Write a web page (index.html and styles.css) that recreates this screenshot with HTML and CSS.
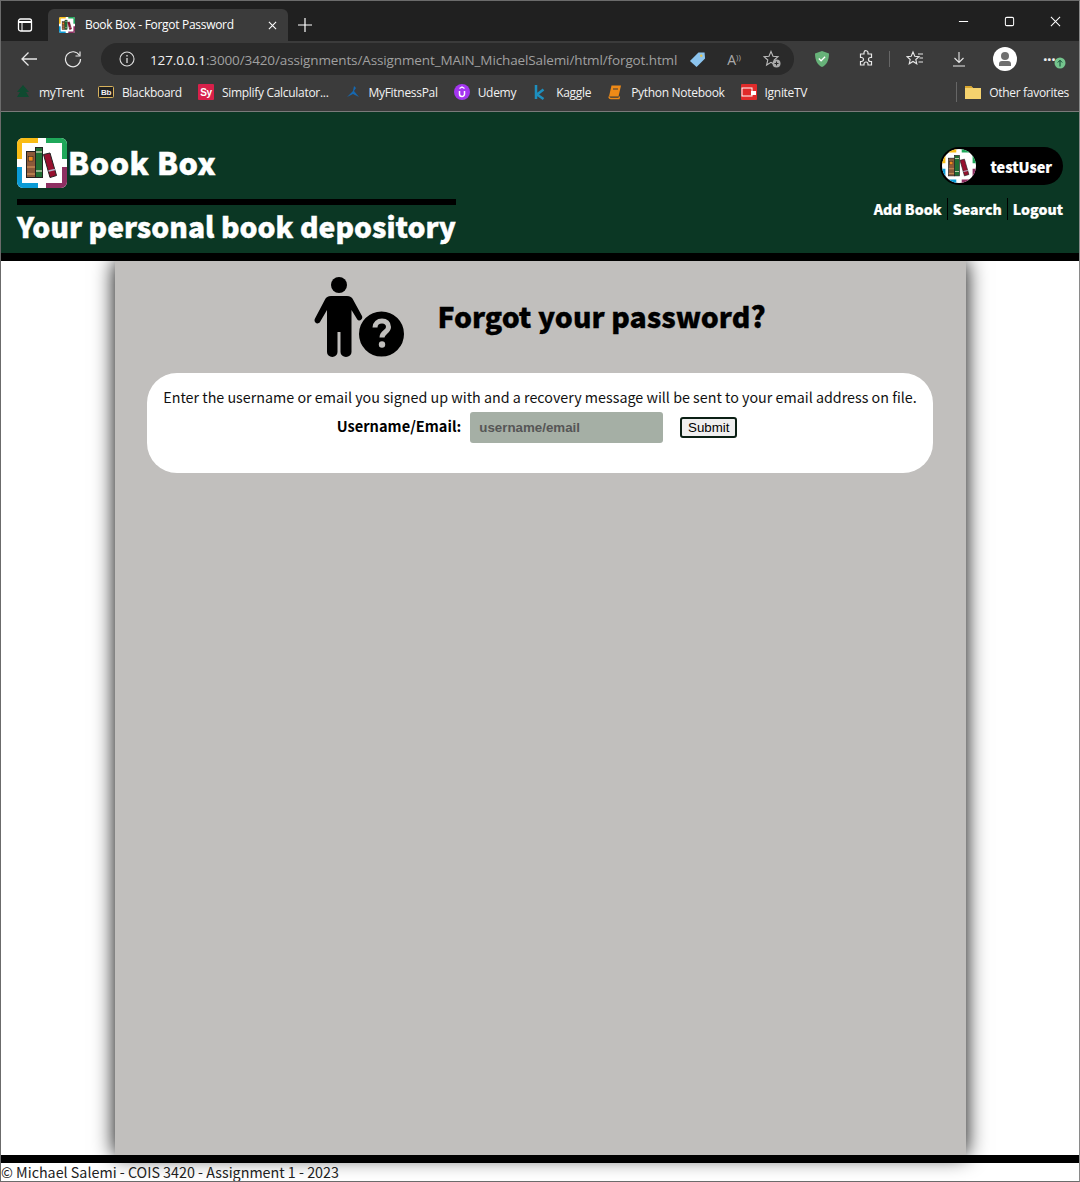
FILE: index.html
```html
<!DOCTYPE html>
<html lang="en">
<head>
    <meta charset="UTF-8">
    <meta name="viewport" content="width=device-width, initial-scale=1.0">
    <title>Book Box - Forgot Password</title>
    <link rel="stylesheet" href="styles.css">
</head>
<body>

<svg class="defs" width="0" height="0" aria-hidden="true">
    <symbol id="logo" viewBox="0 0 50 50">
        <rect width="50" height="50" rx="6" fill="#fff"/>
        <path d="M21 0H6a6 6 0 0 0-6 6v15h5V5h16z" fill="#f9bc15"/>
        <path d="M29 0h15a6 6 0 0 1 6 6v15h-5V5H29z" fill="#1fa85a"/>
        <path d="M0 29v15a6 6 0 0 0 6 6h15v-5H5V29z" fill="#0a9bd6"/>
        <path d="M50 29v15a6 6 0 0 1-6 6H29v-5h16V29z" fill="#8e2f62"/>
        <rect x="9.500" y="13.500" width="9" height="26" fill="#8c5a3a" stroke="#222"/>
        <rect x="11.500" y="18.500" width="4.500" height="4.500" fill="#f08a1d" stroke="#222" stroke-width="0.500"/>
        <path d="M10 29h8M10 36h8" stroke="#e0a060"/>
        <rect x="18.500" y="9.500" width="7" height="30" fill="#1f6e34" stroke="#222"/>
        <path d="M19 14h6M19 33h6" stroke="#b8c8a8" stroke-width="1.500"/>
        <path d="M26.500 16.500l6.500-1.500 6.500 22.500-6.500 2z" fill="#96102e" stroke="#222"/>
        <path d="M31.500 33l6.500-1.500" stroke="#b0b0c8" stroke-width="1.500"/>
    </symbol>
</svg>

<div class="window">

    <div class="tab-bar">
        <svg class="icon tab-panel" viewBox="0 0 16 16"><rect x="1.500" y="2" width="13" height="12" rx="2" fill="none" stroke="#fff" stroke-width="1.300"/><path d="M1.500 5h13" stroke="#fff" stroke-width="2"/><path d="M5 4v10" stroke="#fff" stroke-width="1"/></svg>
        <div class="tab">
            <svg class="favicon"><use href="#logo"/></svg>
            <span class="tab-title">Book Box - Forgot Password</span>
            <svg class="icon tab-close" viewBox="0 0 10 10"><path d="M1 1l8 8M9 1l-8 8" stroke="#fff" stroke-width="1.200"/></svg>
        </div>
        <svg class="icon tab-new" viewBox="0 0 14 14"><path d="M7 0v14M0 7h14" stroke="#fff" stroke-width="1.200"/></svg>
        <div class="window-controls">
            <svg class="icon" viewBox="0 0 12 12"><path d="M1 6h10" stroke="#fff" stroke-width="1.100"/></svg>
            <svg class="icon" viewBox="0 0 12 12"><rect x="1.500" y="1.500" width="9" height="9" rx="1.500" fill="none" stroke="#fff" stroke-width="1.100"/></svg>
            <svg class="icon" viewBox="0 0 12 12"><path d="M1 1l10 10M11 1L1 11" stroke="#fff" stroke-width="1.100"/></svg>
        </div>
    </div>

    <div class="toolbar">
        <svg class="icon nav-icon" viewBox="0 0 18 18"><path d="M17 9H2M8.500 2.500L2 9l6.500 6.500" fill="none" stroke="#e8e8e8" stroke-width="1.300"/></svg>
        <svg class="icon nav-icon" viewBox="0 0 18 18"><path d="M15.500 5.500A7.500 7.500 0 1 0 16.500 9" fill="none" stroke="#e8e8e8" stroke-width="1.200"/><path d="M16 1.500v4.500h-4.500" fill="none" stroke="#e8e8e8" stroke-width="1.200"/></svg>
        <div class="address">
            <svg class="icon info" viewBox="0 0 16 16"><circle cx="8" cy="8" r="7" fill="none" stroke="#ddd" stroke-width="1.100"/><path d="M8 7v5M8 4v1.500" stroke="#ddd" stroke-width="1.300"/></svg>
            <span class="url"><b>127.0.0.1</b>:3000/3420/assignments/Assignment_MAIN_MichaelSalemi/html/forgot.html</span>
            <svg class="icon tag" viewBox="0 0 18 18"><path d="M1 10.500L10 1.500l6.500 0 .5 6.500-9 9z" fill="#8cc4ee"/><circle cx="13" cy="5" r="1.300" fill="#e6c24a"/></svg>
            <span class="read-aloud">A<small>))</small></span>
            <svg class="icon star-add" viewBox="0 0 18 18"><path d="M8 1.500l2 4.800 5 .4-3.800 3.300 1.200 5-4.400-2.700-4.400 2.700 1.200-5L1 6.700l5-.4z" fill="none" stroke="#bbb" stroke-width="1.100"/><circle cx="13.500" cy="13.500" r="4" fill="#aaa"/><path d="M13.500 11.500v4M11.500 13.500h4" stroke="#2b2b2b" stroke-width="1.100"/></svg>
        </div>
        <div class="tools">
            <svg class="icon shield" viewBox="0 0 16 18"><path d="M8 1l7 2.500c0 7-2.500 11.500-7 13.500C3.500 15 1 10.500 1 3.500z" fill="#67b279"/><path d="M4.800 8.500l2.300 2.300 4-4" fill="none" stroke="#fff" stroke-width="1.300"/></svg>
            <svg class="icon puzzle" viewBox="0 0 18 18"><path d="M7 2.500a2 2 0 0 1 4 .5v1h3.500v3.500h-1a2 2 0 0 0 0 4h1V15H11v-1a2 2 0 0 0-4 0v1H3.500v-3.500h1a2 2 0 0 0 0-4h-1V4H7z" fill="none" stroke="#e8e8e8" stroke-width="1.200"/></svg>
            <span class="tool-sep"></span>
            <svg class="icon fav-list" viewBox="0 0 18 18"><path d="M7 2l1.800 4.300 4.200.4-3.200 2.800 1 4.300L7 11.500l-3.800 2.300 1-4.300L1 6.700l4.200-.4z" fill="none" stroke="#e8e8e8" stroke-width="1.100"/><path d="M12 4h5M13.500 8H17M12.500 12H17" stroke="#e8e8e8" stroke-width="1.100"/></svg>
            <svg class="icon download" viewBox="0 0 14 16"><path d="M7 1v10M2.500 7L7 11.500 11.500 7M1 15h12" fill="none" stroke="#e8e8e8" stroke-width="1.100"/></svg>
            <svg class="icon profile" viewBox="0 0 24 24"><circle cx="12" cy="12" r="12" fill="#fff"/><circle cx="12" cy="9" r="4" fill="#707070"/><path d="M6 19v-2a3 3 0 0 1 3-3h6a3 3 0 0 1 3 3v2z" fill="#707070"/></svg>
            <div class="more">
                <span class="dots">&middot;&middot;&middot;</span>
                <svg class="update" viewBox="0 0 12 12"><circle cx="6" cy="6" r="5.500" fill="#74c48d"/><path d="M6 9.500v-6M3.800 5.500L6 3.300l2.200 2.200" fill="none" stroke="#143" stroke-width="1"/></svg>
            </div>
        </div>
    </div>

    <div class="bookmarks">
        <a class="bookmark">
            <svg class="bm-icon" viewBox="0 0 16 16"><path d="M8 1L2 8h3l-3 5h12l-3-5h3z" fill="#0f4a30"/></svg>myTrent
        </a>
        <a class="bookmark">
            <svg class="bm-icon" viewBox="0 0 16 16"><rect x="0.500" y="2.500" width="15" height="11" rx="1" fill="#222" stroke="#d8b25c"/><text x="8" y="11" text-anchor="middle" class="bb-text">Bb</text></svg>Blackboard
        </a>
        <a class="bookmark">
            <svg class="bm-icon" viewBox="0 0 16 16"><rect width="16" height="16" rx="1" fill="#d8204a"/><text x="8" y="12" text-anchor="middle" class="sy-text">Sy</text></svg>Simplify Calculator...
        </a>
        <a class="bookmark">
            <svg class="bm-icon" viewBox="0 0 16 16"><path d="M9 2l-1 5-6 6 6-3 6 3-5-6 2-3z" fill="#1668b0"/></svg>MyFitnessPal
        </a>
        <a class="bookmark">
            <svg class="bm-icon" viewBox="0 0 16 16"><circle cx="8" cy="8" r="8" fill="#a435f0"/><path d="M5.500 7v3a2.500 2.500 0 0 0 5 0V7" fill="none" stroke="#fff" stroke-width="1.500"/><path d="M5.500 4.500L8 3l2.500 1.500" fill="none" stroke="#fff" stroke-width="1.200"/></svg>Udemy
        </a>
        <a class="bookmark">
            <svg class="bm-icon" viewBox="0 0 16 16"><path d="M4 1v14M11.500 5.500L5 10.500 11.500 15" fill="none" stroke="#1d8fbe" stroke-width="2.500"/></svg>Kaggle
        </a>
        <a class="bookmark">
            <svg class="bm-icon" viewBox="0 0 16 16"><path d="M4.500 1.500H14l-2.500 11H2z" fill="#ef8a17"/><path d="M2 12.500c0 2 1 2 2 2h8l.5-2" fill="none" stroke="#ef8a17" stroke-width="1.300"/><path d="M6 5h5" stroke="#3b3b3b"/></svg>Python Notebook
        </a>
        <a class="bookmark">
            <svg class="bm-icon" viewBox="0 0 16 16"><rect width="16" height="16" rx="1" fill="#e02b2b"/><rect x="1" y="4" width="10" height="8" fill="none" stroke="#fff"/><rect x="10" y="7" width="5" height="4" fill="#fff"/></svg>IgniteTV
        </a>
        <span class="bm-sep"></span>
        <a class="bookmark">
            <svg class="bm-icon" viewBox="0 0 16 16"><path d="M0 2h6l2 2h8v11H0z" fill="#f5d26e"/><path d="M0 2h6l2 2H0z" fill="#d9a62e"/></svg>Other favorites
        </a>
    </div>

    <header class="site-header">
        <div class="brand">
            <div class="brand-row">
                <svg class="brand-logo"><use href="#logo"/></svg>
                <h1>Book Box</h1>
            </div>
            <p class="tagline">Your personal book depository</p>
        </div>
        <div class="account">
            <div class="user-pill">
                <svg class="avatar"><use href="#logo"/></svg>
                <span>testUser</span>
            </div>
            <nav class="site-nav">
                <a>Add Book</a>
                <a>Search</a>
                <a>Logout</a>
            </nav>
        </div>
    </header>

    <main class="content">
        <div class="heading-row">
            <svg class="forgot-icon" viewBox="0 0 90 80">
                <circle cx="25" cy="8" r="8"/>
                <path d="M17 19H33C36 19 38 20.500 39 22.500L48 39C49.500 42 45 45.500 43 42L37.500 33V75a5.500 5 0 0 1-11 0V55h-3V75a5.250 5 0 0 1-10.500 0V33L6 45C3.500 48.500-1 45 1 41.500L11 22.500C12 20.500 14 19 17 19z"/>
                <circle cx="67.500" cy="57" r="23.500" class="help-disc"/>
                <path d="M61 50.500c0-4 3-6.500 7-6.500s6.500 2.500 6.500 6c0 5-6.500 5-6.500 10.500" class="help-mark"/>
                <circle cx="68" cy="67.500" r="3.200" class="help-dot"/>
            </svg>
            <h2>Forgot your password?</h2>
        </div>
        <form class="card">
            <p>Enter the username or email you signed up with and a recovery message will be sent to your email address on file.</p>
            <div class="form-row">
                <label for="username">Username/Email:</label>
                <input type="text" id="username" placeholder="username/email">
                <button type="button">Submit</button>
            </div>
        </form>
    </main>

    <footer class="site-footer">&copy; Michael Salemi - COIS 3420 - Assignment 1 - 2023</footer>
</div>

</body>
</html>
```

FILE: styles.css
```css
/* Reset some default styles */
* {
    margin: 0;
    padding: 0;
    box-sizing: border-box;
}

body {
    font-family: "Noto Sans CJK JP", "Noto Sans", sans-serif;
    background-color: #fff;
}

.defs {
    display: block;
    height: 0;
}

.icon {
    display: block;
    flex: none;
}

/* Browser frame */
.window {
    height: 1182px;
    display: flex;
    flex-direction: column;
    border: 1px solid #6b6b6b;
    border-right-color: #8a8a8a;
    overflow: hidden;
}

.tab-bar {
    height: 40px;
    flex: none;
    display: flex;
    align-items: flex-end;
    background-color: #202020;
    padding-left: 16px;
    color: #fff;
    font-family: "Open Sans", sans-serif;
}

.tab-panel {
    width: 16px;
    height: 16px;
    margin-bottom: 8px;
}

.tab {
    width: 240px;
    height: 32px;
    margin-left: 15px;
    display: flex;
    align-items: center;
    background-color: #3b3b3b;
    border-radius: 6px 6px 0 0;
    padding-left: 11px;
}

.favicon {
    width: 16px;
    height: 16px;
}

.tab-title {
    margin-left: 10px;
    font-size: 12px;
    letter-spacing: -0.3px;
    white-space: nowrap;
    padding-bottom: 1px;
}

.tab-close {
    width: 9px;
    height: 9px;
    margin-left: auto;
    margin-right: 11px;
}

.tab-new {
    width: 14px;
    height: 14px;
    margin-left: 10px;
    margin-bottom: 9px;
}

.window-controls {
    margin-left: auto;
    margin-right: 18px;
    align-self: center;
    display: flex;
    gap: 35px;
}

.window-controls .icon {
    width: 11px;
    height: 11px;
}

.toolbar {
    height: 36px;
    flex: none;
    display: flex;
    align-items: center;
    background-color: #3b3b3b;
    padding-left: 19px;
    font-family: "Open Sans", sans-serif;
}

.nav-icon {
    width: 18px;
    height: 18px;
    margin-right: 26px;
}

.nav-icon + .nav-icon {
    margin-right: 19px;
}

.address {
    width: 693px;
    height: 32px;
    flex: none;
    display: flex;
    align-items: center;
    background-color: #2a2a2a;
    border-radius: 16px;
    padding-left: 18px;
}

.info {
    width: 16px;
    height: 16px;
}

.url {
    margin-left: 15px;
    padding-top: 1px;
    font-size: 13.500px;
    color: #a0a0a0;
    letter-spacing: -0.12px;
    white-space: nowrap;
}

.url b {
    font-weight: 400;
    color: #f0f0f0;
}

.tag {
    width: 17px;
    height: 17px;
    margin-left: 12px;
}

.read-aloud {
    margin-left: 21px;
    font-size: 14px;
    color: #aaa;
}

.read-aloud small {
    font-size: 8px;
    vertical-align: 5px;
}

.star-add {
    width: 18px;
    height: 18px;
    margin-left: 22px;
}

.tools {
    flex: 1;
    display: flex;
    align-items: center;
    padding-left: 20px;
}

.shield {
    width: 16px;
    height: 18px;
}

.puzzle {
    width: 18px;
    height: 18px;
    margin-left: 27px;
}

.tool-sep {
    width: 1px;
    height: 16px;
    margin-left: 14px;
    background-color: #666;
}

.fav-list {
    width: 18px;
    height: 18px;
    margin-left: 16px;
}

.download {
    width: 14px;
    height: 16px;
    margin-left: 28px;
}

.profile {
    width: 24px;
    height: 24px;
    margin-left: 27px;
}

.more {
    margin-left: 26px;
    display: flex;
    align-items: center;
    position: relative;
    width: 22px;
    height: 20px;
    color: #eee;
}

.dots {
    font-size: 16px;
    font-weight: 700;
    line-height: 16px;
    letter-spacing: -0.5px;
}

.update {
    position: absolute;
    left: 11px;
    top: 8px;
    width: 12px;
    height: 12px;
}

.bookmarks {
    height: 35px;
    flex: none;
    display: flex;
    align-items: center;
    background-color: #3b3b3b;
    border-bottom: 1px solid #7a7a7a;
    padding: 0 0 4px 14px;
    font-family: "Open Sans", sans-serif;
    font-size: 12px;
    letter-spacing: -0.3px;
    color: #f2f2f2;
}

.bookmark {
    display: flex;
    align-items: center;
    margin-right: 16px;
    white-space: nowrap;
}

.bookmarks .bookmark:first-child {
    margin-right: 14px;
}

.bm-icon {
    width: 16px;
    height: 16px;
    margin-right: 8px;
    flex: none;
}

.bb-text {
    font-family: "Liberation Sans", sans-serif;
    font-size: 8px;
    font-weight: 700;
    fill: #f2f2f2;
}

.sy-text {
    font-family: "Liberation Sans", sans-serif;
    font-size: 10px;
    font-weight: 700;
    fill: #fff;
}

.bm-sep {
    width: 1px;
    height: 20px;
    margin-left: auto;
    margin-right: 8px;
    background-color: #666;
}

.bookmarks .bookmark:last-child {
    margin-right: 10px;
}

/* Site header */
.site-header {
    height: 149px;
    flex: none;
    position: relative;
    z-index: 2;
    display: flex;
    justify-content: space-between;
    background-color: #0b3724;
    border-bottom: 8px solid #000;
    padding: 26px 16px 0;
    color: #fff;
}

.brand {
    width: 439px;
}

.brand-row {
    display: flex;
    align-items: center;
    border-bottom: 6px solid #000;
    padding-bottom: 11px;
}

.brand-logo {
    width: 50px;
    height: 50px;
    flex: none;
}

.brand-row h1 {
    margin-left: 1px;
    padding-bottom: 2px;
    font-size: 30.500px;
    line-height: 46px;
    font-weight: 900;
    letter-spacing: 0.5px;
    -webkit-text-stroke: 0.5px #fff;
}

.tagline {
    margin-top: 2px;
    font-size: 28.300px;
    line-height: 38px;
    font-weight: 900;
    white-space: nowrap;
    -webkit-text-stroke: 0.4px #fff;
}

.account {
    display: flex;
    flex-direction: column;
    align-items: flex-end;
}

.user-pill {
    width: 123px;
    height: 38px;
    margin-top: 9px;
    display: flex;
    align-items: center;
    background-color: #000;
    border-radius: 19px;
    padding: 0 11px 0 2px;
    font-size: 14.400px;
    font-weight: 900;
    -webkit-text-stroke: 0.2px #fff;
}

.avatar {
    width: 34px;
    height: 34px;
    border-radius: 50%;
    flex: none;
}

.user-pill span {
    margin-left: auto;
}

.site-nav {
    margin-top: 13px;
    display: flex;
    font-size: 14.150px;
    line-height: 22px;
    font-weight: 900;
    -webkit-text-stroke: 0.2px #fff;
}

.site-nav a + a {
    margin-left: 5px;
    border-left: 1px solid #000;
    padding-left: 5px;
}

/* Main column */
.content {
    width: 851px;
    flex: 1;
    position: relative;
    z-index: 1;
    margin: 0 auto 0 114px;
    background-color: #c1bfbd;
    box-shadow: 0 0 20px #000;
    padding: 0 33px 0 32px;
}

.heading-row {
    height: 112px;
    display: flex;
    align-items: center;
    justify-content: center;
    gap: 33px;
}

.forgot-icon {
    width: 90px;
    height: 80px;
}

.help-disc {
    stroke: #c1bfbd;
    stroke-width: 2;
}

.help-mark {
    fill: none;
    stroke: #c1bfbd;
    stroke-width: 5;
}

.help-dot {
    fill: #c1bfbd;
}

.heading-row h2 {
    font-size: 28.400px;
    font-weight: 900;
    color: #000;
    margin-bottom: 4px;
    -webkit-text-stroke: 0.3px #000;
}

.card {
    height: 100px;
    background-color: #fff;
    border-radius: 30px;
    padding-top: 12px;
    text-align: center;
    font-size: 14.300px;
    color: #111;
}

.card p {
    line-height: 24px;
    white-space: nowrap;
}

.form-row {
    margin-top: 3px;
    padding-right: 6px;
    display: flex;
    align-items: center;
    justify-content: center;
}

.form-row label {
    padding-bottom: 4px;
    font-size: 14.600px;
    font-weight: 700;
    color: #000;
}

.form-row input {
    width: 193px;
    height: 31px;
    margin-left: 9px;
    border: none;
    border-radius: 3px;
    background-color: #a5afa5;
    padding-left: 9px;
    font-family: "Liberation Sans", sans-serif;
    font-size: 13.333px;
    font-weight: 700;
}

.form-row input::placeholder {
    color: #565656;
    opacity: 1;
}

.form-row button {
    width: 57px;
    height: 21px;
    margin-left: 17px;
    border: 2px solid #0b1f14;
    border-radius: 3px;
    background-color: #efefef;
    font-family: "Liberation Sans", sans-serif;
    font-size: 13.333px;
    color: #000;
}

/* Footer */
.site-footer {
    height: 26px;
    flex: none;
    border-top: 8px solid #000;
    font-size: 14.300px;
    line-height: 17px;
    color: #222;
}
```
